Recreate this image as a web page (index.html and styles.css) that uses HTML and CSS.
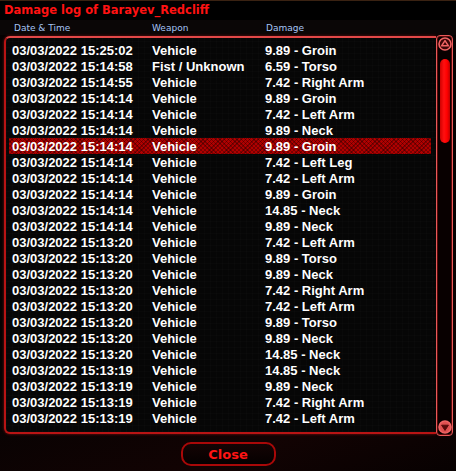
FILE: index.html
```html
<!DOCTYPE html>
<html lang="en">
<head>
    <meta charset="UTF-8">
    <title>Damage log</title>
    <link rel="stylesheet" href="styles.css">
</head>
<body>
    <div class="window">
        <div class="title">Damage log of Barayev_Redcliff</div>
        <div class="head">
            <span>Date &amp; Time</span>
            <span>Weapon</span>
            <span>Damage</span>
        </div>
        <div class="panel">
            <div class="list">
                <div class="row"><span>03/03/2022 15:25:02</span><span>Vehicle</span><span>9.89 - Groin</span></div>
                <div class="row"><span>03/03/2022 15:14:58</span><span>Fist / Unknown</span><span>6.59 - Torso</span></div>
                <div class="row"><span>03/03/2022 15:14:55</span><span>Vehicle</span><span>7.42 - Right Arm</span></div>
                <div class="row"><span>03/03/2022 15:14:14</span><span>Vehicle</span><span>9.89 - Groin</span></div>
                <div class="row"><span>03/03/2022 15:14:14</span><span>Vehicle</span><span>7.42 - Left Arm</span></div>
                <div class="row"><span>03/03/2022 15:14:14</span><span>Vehicle</span><span>9.89 - Neck</span></div>
                <div class="row selected"><span>03/03/2022 15:14:14</span><span>Vehicle</span><span>9.89 - Groin</span></div>
                <div class="row"><span>03/03/2022 15:14:14</span><span>Vehicle</span><span>7.42 - Left Leg</span></div>
                <div class="row"><span>03/03/2022 15:14:14</span><span>Vehicle</span><span>7.42 - Left Arm</span></div>
                <div class="row"><span>03/03/2022 15:14:14</span><span>Vehicle</span><span>9.89 - Groin</span></div>
                <div class="row"><span>03/03/2022 15:14:14</span><span>Vehicle</span><span>14.85 - Neck</span></div>
                <div class="row"><span>03/03/2022 15:14:14</span><span>Vehicle</span><span>9.89 - Neck</span></div>
                <div class="row"><span>03/03/2022 15:13:20</span><span>Vehicle</span><span>7.42 - Left Arm</span></div>
                <div class="row"><span>03/03/2022 15:13:20</span><span>Vehicle</span><span>9.89 - Torso</span></div>
                <div class="row"><span>03/03/2022 15:13:20</span><span>Vehicle</span><span>9.89 - Neck</span></div>
                <div class="row"><span>03/03/2022 15:13:20</span><span>Vehicle</span><span>7.42 - Right Arm</span></div>
                <div class="row"><span>03/03/2022 15:13:20</span><span>Vehicle</span><span>7.42 - Left Arm</span></div>
                <div class="row"><span>03/03/2022 15:13:20</span><span>Vehicle</span><span>9.89 - Torso</span></div>
                <div class="row"><span>03/03/2022 15:13:20</span><span>Vehicle</span><span>9.89 - Neck</span></div>
                <div class="row"><span>03/03/2022 15:13:20</span><span>Vehicle</span><span>14.85 - Neck</span></div>
                <div class="row"><span>03/03/2022 15:13:19</span><span>Vehicle</span><span>14.85 - Neck</span></div>
                <div class="row"><span>03/03/2022 15:13:19</span><span>Vehicle</span><span>9.89 - Neck</span></div>
                <div class="row"><span>03/03/2022 15:13:19</span><span>Vehicle</span><span>7.42 - Right Arm</span></div>
                <div class="row"><span>03/03/2022 15:13:19</span><span>Vehicle</span><span>7.42 - Left Arm</span></div>
            </div>
            <div class="scroll">
                <svg class="arrow" width="14" height="14" viewBox="0 0 14 14">
                    <circle cx="7" cy="7" r="6" fill="#3a0606" stroke="#f06464" stroke-width="1.6"/>
                    <path d="M7 3.6 L10.4 8.8 L3.6 8.8 Z" fill="none" stroke="#f06464" stroke-width="1.5" stroke-linejoin="round"/>
                </svg>
                <div class="thumb"></div>
                <div class="track"></div>
                <svg class="arrow" width="14" height="14" viewBox="0 0 14 14">
                    <circle cx="7" cy="7" r="6" fill="#e05050" stroke="#f06464" stroke-width="1.6"/>
                    <path d="M7 10.4 L10.4 5.2 L3.6 5.2 Z" fill="#5a0a0a" stroke="#5a0a0a" stroke-width="1" stroke-linejoin="round"/>
                </svg>
            </div>
        </div>
        <div class="foot">
            <button class="close">Close</button>
        </div>
    </div>
</body>
</html>
```

FILE: styles.css
```css
body {
    margin: 0;
    padding: 0;
    background-color: #000;
    font-family: "Liberation Sans", Arial, sans-serif;
}
.window {
    width: 456px;
    height: 471px;
    display: flex;
    flex-direction: column;
    background: linear-gradient(160deg, #050202 60%, #120303 85%, #070101 100%);
    overflow: hidden;
}
.title {
    height: 20px;
    line-height: 18px;
    padding-left: 4px;
    border-top: 1px solid #3a2212;
    box-sizing: border-box;
    background-color: #000;
    color: #ff1212;
    font-family: "DejaVu Sans", Verdana, sans-serif;
    font-weight: bold;
    font-size: 11.5px;
}
.head {
    height: 15px;
    display: grid;
    grid-template-columns: 138px 114px 1fr;
    padding-left: 14px;
    line-height: 17px;
    background-color: #0a0606;
    color: #a6c4f4;
    font-family: "DejaVu Sans", Verdana, sans-serif;
    font-size: 9px;
}
.panel {
    display: flex;
    margin-left: 4px;
    width: 449px;
    height: 401px;
}
.list {
    flex: 1;
    margin-top: 1px;
    height: 398px;
    box-sizing: border-box;
    padding: 4px 5px 0 3px;
    border: 2px solid #b81414;
    border-top-color: #e24848;
    border-right: none;
    border-radius: 6px 0 0 6px;
    box-shadow: 0 0 3px rgba(255, 40, 40, 0.45);
    background-color: #060606;
    background-image:
        repeating-linear-gradient(90deg, rgba(255, 255, 255, 0.012) 0 1px, transparent 1px 6px),
        repeating-linear-gradient(0deg, rgba(255, 255, 255, 0.01) 0 1px, transparent 1px 6px);
}
.row {
    display: grid;
    grid-template-columns: 140px 113px 1fr;
    height: 16px;
    line-height: 17px;
    padding-left: 3px;
    color: #fff;
    font-weight: bold;
    font-size: 13px;
    white-space: nowrap;
}
.row.selected {
    background-color: #b00000;
    background-image:
        repeating-linear-gradient(45deg, rgba(0, 0, 0, 0.3) 0 1px, transparent 1px 3px),
        repeating-linear-gradient(-45deg, rgba(0, 0, 0, 0.3) 0 1px, transparent 1px 3px);
}
.scroll {
    width: 17px;
    height: 401px;
    box-sizing: border-box;
    border: 1px solid #e85a5a;
    border-radius: 4px;
    box-shadow: inset 0 0 0 1px #5a0808;
    background-color: #080000;
    display: flex;
    flex-direction: column;
    align-items: center;
    padding: 1px 0;
}
.arrow {
    flex: none;
}
.thumb {
    width: 10px;
    height: 84px;
    margin-top: 8px;
    border-radius: 5px;
    background: linear-gradient(90deg, #d00000, #ff1010 40%, #ff0000 70%, #c00000);
}
.track {
    flex: 1;
}
.foot {
    flex: 1;
    display: flex;
    justify-content: center;
    align-items: flex-start;
    padding-top: 6px;
}
.close {
    width: 95px;
    height: 24px;
    padding: 0;
    border: 2px solid #a80808;
    border-radius: 10px;
    background: linear-gradient(180deg, #140404, #050000);
    color: #ff1414;
    font-family: "DejaVu Sans", Verdana, sans-serif;
    font-weight: bold;
    font-size: 13px;
    cursor: pointer;
}
```
